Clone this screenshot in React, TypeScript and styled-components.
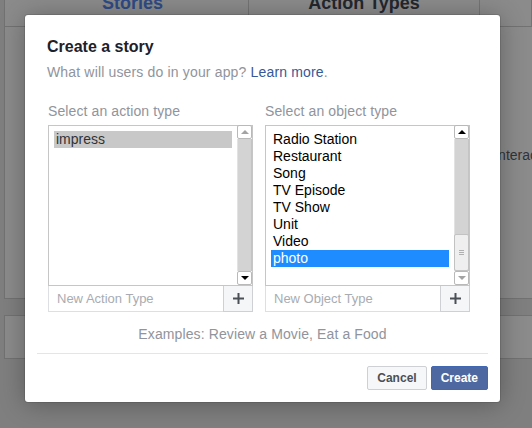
import React from 'react';
import styled, { createGlobalStyle } from 'styled-components';

const GlobalStyle = createGlobalStyle`
	html,
	body {
		margin: 0;
		padding: 0;
	}
	body {
		background: #7f7f7f;
		font-family: 'Liberation Sans', Helvetica, Arial, sans-serif;
		overflow: hidden;
	}
`;

const Page = styled.div`
	position: relative;
	width: 532px;
	height: 428px;
	padding-left: 4px;
	box-sizing: border-box;
	overflow: hidden;
`;

// dimmed page behind the dialog
const Panel = styled.div`
	height: 299px;
	box-sizing: border-box;
	background: #8b8b8b;
	border-left: 1px solid #727272;
	border-bottom: 1px solid #727272;
`;

const TabBar = styled.div`
	display: flex;
	height: 27px;
	box-sizing: border-box;
	border-bottom: 1px solid #727272;
`;

const Tab = styled.div<{ $w?: number; $active?: boolean }>`
	${({ $w }) => ($w ? `width: ${$w}px;` : 'flex: 1;')}
	box-sizing: border-box;
	padding-left: ${({ $active }) => ($active ? '12px' : '0')};
	border-right: 1px solid #747474;
	text-align: center;
	font-size: 18px;
	font-weight: bold;
	line-height: 20px;
	color: ${({ $active }) => ($active ? '#2f4b85' : '#24272e')};
	span {
		display: block;
		margin-top: -7px;
	}
`;

const PanelText = styled.div`
	padding: 119px 0 0 490px;
	font-size: 14px;
	line-height: 18px;
	color: #30333a;
	white-space: nowrap;
`;

const LowerBox = styled.div`
	margin-top: 16px;
	height: 44px;
	box-sizing: border-box;
	background: #8b8b8b;
	border: 1px solid #727272;
	border-right: 0;
`;

// dialog
const Dialog = styled.div`
	position: absolute;
	left: 25px;
	top: 15px;
	width: 475px;
	background: #fff;
	border-radius: 3px;
	box-shadow: 0 2px 26px rgba(0, 0, 0, 0.3), 0 0 0 1px rgba(0, 0, 0, 0.1);
`;

const Header = styled.div`
	padding: 22px 30px 0 22px;
`;

const Title = styled.h2`
	margin: 0;
	font-size: 16px;
	line-height: 20px;
	font-weight: bold;
	color: #1d2129;
`;

const Subtitle = styled.p`
	margin: 6px 0 0;
	font-size: 14px;
	line-height: 18px;
	letter-spacing: 0.16px;
	color: #90949c;
	a {
		color: #365899;
		text-decoration: none;
	}
`;

const Columns = styled.div`
	display: grid;
	grid-template-columns: 205px 205px;
	column-gap: 12px;
	margin-top: 21px;
	padding-left: 23px;
`;

const Column = styled.div`
	display: flex;
	flex-direction: column;
`;

const Label = styled.div`
	font-size: 14px;
	line-height: 18px;
	letter-spacing: 0.1px;
	color: #90949c;
	margin-bottom: 5px;
`;

const ListBox = styled.div`
	display: flex;
	height: 161px;
	box-sizing: border-box;
	border: 1px solid #c6c6c6;
`;

const Options = styled.div`
	flex: 1;
	padding: 5px 5px 0 5px;
	overflow: hidden;
`;

const Option = styled.div<{ $sel?: 'gray' | 'blue' }>`
	height: 17px;
	line-height: 17px;
	font-size: 14px;
	padding: 0 2px;
	white-space: nowrap;
	color: ${({ $sel }) => ($sel === 'blue' ? '#fff' : $sel === 'gray' ? '#333' : '#000')};
	background: ${({ $sel }) => ($sel === 'blue' ? '#1e8cff' : $sel === 'gray' ? '#c8c8c8' : 'transparent')};
`;

const ScrollBar = styled.div`
	display: flex;
	flex-direction: column;
	width: 15px;
	margin-top: -1px;
`;

const Arrow = styled.div<{ $dir: 'up' | 'down'; $off?: boolean }>`
	height: 14px;
	box-sizing: border-box;
	background: #fff;
	border: 1px solid #b9b9b9;
	border-radius: 2px;
	display: flex;
	align-items: center;
	justify-content: center;
	&::after {
		content: '';
		width: 0;
		height: 0;
		border-left: 4px solid transparent;
		border-right: 4px solid transparent;
		${({ $dir, $off }) =>
			`${$dir === 'up' ? 'border-bottom' : 'border-top'}: 4px solid ${$off ? '#a3a3a3' : '#000'};`}
	}
`;

const Track = styled.div`
	flex: 1;
	display: flex;
	flex-direction: column;
	justify-content: flex-end;
	background: #d3d3d3;
	border-left: 1px solid #e2e2e2;
	border-right: 1px solid #c4c4c4;
`;

const Thumb = styled.div<{ $h: number }>`
	height: ${({ $h }) => $h}px;
	box-sizing: border-box;
	margin: 0 -1px;
	background: #efefef;
	border: 1px solid #c2c2c2;
	border-radius: 2px;
	display: flex;
	align-items: center;
	justify-content: center;
	&::after {
		content: '';
		width: 5px;
		height: 5px;
		border-top: 1px solid #b0b0b0;
		border-bottom: 1px solid #b0b0b0;
		background: linear-gradient(#b0b0b0, #b0b0b0) center / 100% 1px no-repeat;
		box-sizing: border-box;
	}
`;

const InputRow = styled.div`
	display: flex;
	height: 26px;
`;

const Input = styled.input`
	flex: 1;
	min-width: 0;
	box-sizing: border-box;
	border: 1px solid #dddfe2;
	border-top: 0;
	border-right: 0;
	padding: 0 8px;
	font-family: inherit;
	font-size: 13px;
	color: #1d2129;
	outline: none;
	&::placeholder {
		color: #a8acb2;
	}
`;

const AddButton = styled.button`
	width: 30px;
	box-sizing: border-box;
	border: 1px solid #ced0d4;
	border-top: 0;
	background: #f5f6f7;
	padding: 0;
	display: flex;
	align-items: center;
	justify-content: center;
`;

const Examples = styled.div`
	margin-top: 13px;
	text-align: center;
	font-size: 14px;
	line-height: 18px;
	letter-spacing: 0.11px;
	color: #90949c;
`;

const Divider = styled.div`
	margin: 10px 12px 0;
	height: 1px;
	background: #e5e5e5;
`;

const Footer = styled.div`
	display: flex;
	justify-content: flex-end;
	gap: 4px;
	padding: 12px;
`;

const Button = styled.button<{ $primary?: boolean }>`
	height: 24px;
	padding: 0 9px;
	border-radius: 2px;
	font-family: inherit;
	font-size: 12px;
	font-weight: bold;
	border: 1px solid ${({ $primary }) => ($primary ? '#4267b2' : '#ced0d4')};
	background: ${({ $primary }) => ($primary ? '#4e69a2' : '#f6f7f9')};
	color: ${({ $primary }) => ($primary ? '#fff' : '#4b4f56')};
`;

const Plus = () => (
	<svg width="11" height="11" viewBox="0 0 11 11">
		<rect x="4.5" y="0" width="2" height="11" fill="#4b4f56" />
		<rect x="0" y="4.5" width="11" height="2" fill="#4b4f56" />
	</svg>
);

const objectTypes = ['Radio Station', 'Restaurant', 'Song', 'TV Episode', 'TV Show', 'Unit', 'Video'];

export default function App() {
	return (
		<>
			<GlobalStyle />
			<Page>
				<Panel>
					<TabBar>
						<Tab $w={244} $active>
							<span>Stories</span>
						</Tab>
						<Tab $w={231}>
							<span>Action Types</span>
						</Tab>
						<Tab />
					</TabBar>
					<PanelText>interact with your app</PanelText>
				</Panel>
				<LowerBox />

				<Dialog>
					<Header>
						<Title>Create a story</Title>
						<Subtitle>
							What will users do in your app? <a href="#">Learn more</a>.
						</Subtitle>
					</Header>
					<Columns>
						<Column>
							<Label>Select an action type</Label>
							<ListBox>
								<Options>
									<Option $sel="gray">impress</Option>
								</Options>
								<ScrollBar>
									<Arrow $dir="up" $off />
									<Track />
									<Arrow $dir="down" />
								</ScrollBar>
							</ListBox>
							<InputRow>
								<Input placeholder="New Action Type" />
								<AddButton>
									<Plus />
								</AddButton>
							</InputRow>
						</Column>
						<Column>
							<Label>Select an object type</Label>
							<ListBox>
								<Options>
									{objectTypes.map((t) => (
										<Option key={t}>{t}</Option>
									))}
									<Option $sel="blue">photo</Option>
								</Options>
								<ScrollBar>
									<Arrow $dir="up" />
									<Track>
										<Thumb $h={37} />
									</Track>
									<Arrow $dir="down" $off />
								</ScrollBar>
							</ListBox>
							<InputRow>
								<Input placeholder="New Object Type" />
								<AddButton>
									<Plus />
								</AddButton>
							</InputRow>
						</Column>
					</Columns>
					<Examples>Examples: Review a Movie, Eat a Food</Examples>
					<Divider />
					<Footer>
						<Button>Cancel</Button>
						<Button $primary>Create</Button>
					</Footer>
				</Dialog>
			</Page>
		</>
	);
}
